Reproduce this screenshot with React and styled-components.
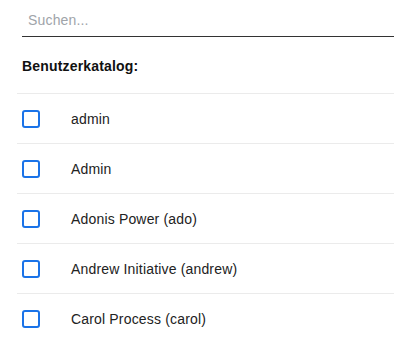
import React from 'react';
import styled, { createGlobalStyle } from 'styled-components';

const GlobalStyle = createGlobalStyle`
    body {
        margin: 0;
        background: #ffffff;
        font-family: "Liberation Sans", Arial, sans-serif;
        color: #222222;
        letter-spacing: 0.17px;
    }
`;

const Page = styled.div`
    padding-left: 17px;
    overflow: hidden;
`;

const SearchInput = styled.input`
    display: block;
    box-sizing: border-box;
    width: calc(100% - 5px);
    height: 37px;
    margin-left: 5px;
    padding: 4px 6px 0;
    border: none;
    border-bottom: 1px solid #333333;
    outline: none;
    font-family: inherit;
    font-size: 14px;
    letter-spacing: inherit;
    color: #222222;
    background: transparent;
    &::placeholder{
        color: #a0a4a9;
    }
`;

const Title = styled.h3`
    margin: 19px 0 17px 5px;
    font-size: 14px;
    line-height: 20px;
    font-weight: bold;
    color: #111111;
`;

const List = styled.ul`
    list-style: none;
    margin: 0;
    padding: 0;
`;

const Row = styled.li`
    display: flex;
    align-items: center;
    height: 49px;
    padding-left: 5px;
    border-top: 1px solid #ebebeb;
    font-size: 14px;
`;

const Box = styled.span`
    box-sizing: border-box;
    width: 18px;
    height: 18px;
    border: 2px solid #1a73e8;
    border-radius: 3px;
    margin-right: 31px;
    flex-shrink: 0;
`;

const users = [
    "admin",
    "Admin",
    "Adonis Power (ado)",
    "Andrew Initiative (andrew)",
    "Carol Process (carol)",
];

const App = () => {
    return(
        <Page>
            <GlobalStyle/>
            <SearchInput placeholder="Suchen..."/>
            <Title>Benutzerkatalog:</Title>
            <List>
                { users.map((u) => (
                    <Row key={u}>
                        <Box/>
                        {u}
                    </Row>
                ))}
            </List>
        </Page>
    )
}

export default App;
